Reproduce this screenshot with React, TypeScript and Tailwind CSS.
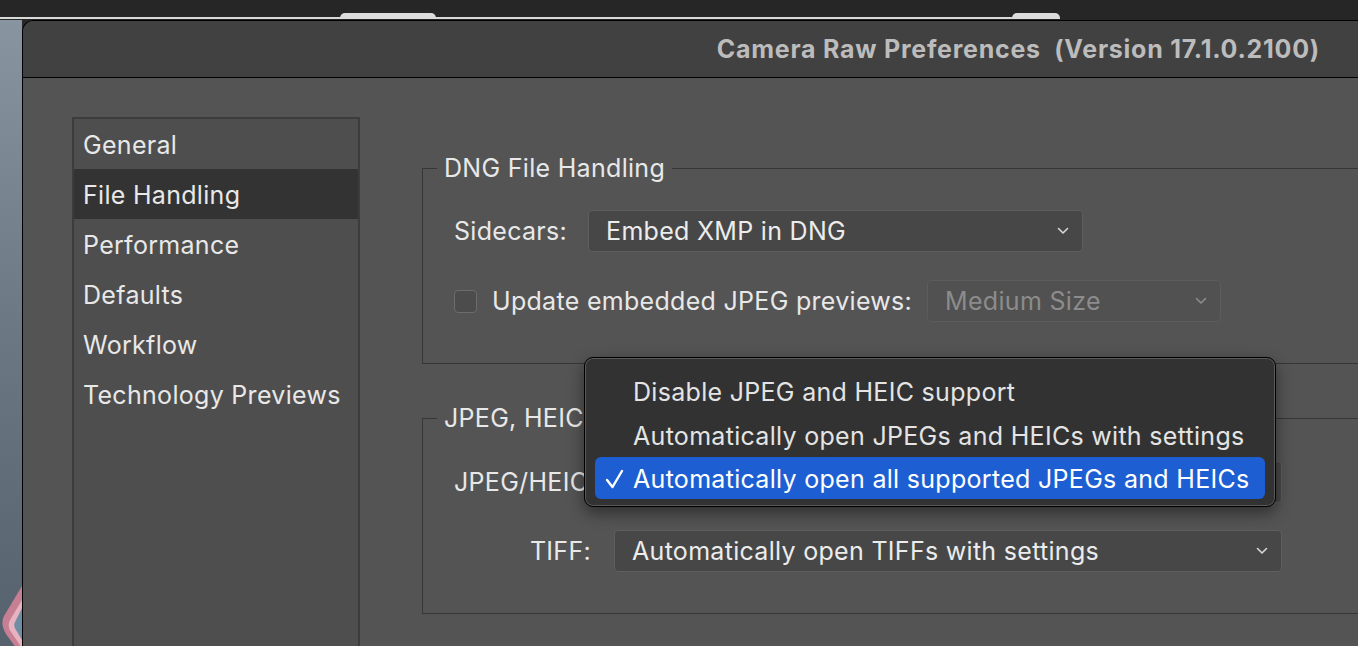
import React from "react";

const Chevron = ({ color = "#d0d0d0" }: { color?: string }) => (
  <svg width="12" height="8" viewBox="0 0 12 8" className="shrink-0">
    <polyline points="1.5,1.5 6,6 10.5,1.5" fill="none" stroke={color} strokeWidth="1.6" strokeLinecap="round" strokeLinejoin="round" />
  </svg>
);

const Select = ({ text, width, disabled = false }: { text: string; width: string; disabled?: boolean }) => (
  <div
    className={
      "h-[42px] flex items-center justify-between pl-[17px] pr-[13px] rounded-[4px] border " +
      (disabled ? "bg-[#515151] border-[#5c5c5c] text-[#8c8c8c] " : "bg-[#474747] border-[#5e5e5e] text-[#ececec] ") +
      width
    }
  >
    <span>{text}</span>
    <Chevron color={disabled ? "#8c8c8c" : "#d6d6d6"} />
  </div>
);

export default function App() {
  const nav = ["General", "File Handling", "Performance", "Defaults", "Workflow", "Technology Previews"];
  return (
    <div
      className="relative w-[1358px] h-[646px] overflow-hidden bg-[#272727] flex flex-col text-[25px] tracking-[0.3px] leading-none text-[#e8e8e8]"
      style={{ fontFamily: "Inter, 'Liberation Sans', sans-serif" }}
    >
      {/* top desktop strip */}
      <div className="relative h-[20px] shrink-0 bg-[#262626]">
        <div className="absolute left-0 top-[17px] w-[1012px] h-[2px] bg-[#d9d9d9]" />
        <div className="absolute left-[340px] top-[13px] w-[96px] h-[6px] rounded-t-[5px] bg-[#dcdcdc]" />
        <div className="absolute left-[1012px] top-[13px] w-[48px] h-[6px] rounded-t-[5px] bg-[#dcdcdc]" />
      </div>

      <div className="flex flex-1 min-h-0">
        {/* wallpaper */}
        <div className="relative w-[22px] shrink-0 bg-gradient-to-b from-[#8894a0] via-[#6b7884] to-[#55626d] overflow-hidden">
          <svg className="absolute left-0 top-[566px]" width="22" height="70" viewBox="0 0 22 70">
            <path d="M22 0 L4 30 Q0 38 6 48 L22 70 Z" fill="#c77f94" />
            <path d="M22 14 L10 34 Q7 40 11 46 L22 62 Z" fill="#e7b3c0" />
            <path d="M22 22 L15 36 Q13 40 16 44 L22 54 Z" fill="#6f8ea4" />
          </svg>
        </div>

        {/* dialog */}
        <div className="flex-1 flex flex-col border-l border-t border-black rounded-tl-[12px] overflow-hidden bg-[#545454]">
          <div className="h-[57px] shrink-0 bg-[#414141] border-b border-black flex items-center justify-end pr-[38px]">
            <span className="font-bold text-[#bcbcbc] tracking-[0.75px]">Camera Raw Preferences&nbsp;&nbsp;(Version 17.1.0.2100)</span>
          </div>

          <div className="flex flex-1 min-h-0 pl-[49px] pt-[39px]">
            {/* sidebar */}
            <div className="w-[288px] shrink-0 border-2 border-b-0 border-[#3c3c3c] bg-[#4e4e4e] flex flex-col">
              {nav.map((n) => (
                <div
                  key={n}
                  className={
                    "h-[50px] flex items-center px-[9px] pt-[3px] " + (n === "File Handling" ? "bg-[#333333]" : "")
                  }
                >
                  {n}
                </div>
              ))}
            </div>

            {/* main */}
            <div className="flex-1 min-w-0 ml-[62px] flex flex-col">
              <fieldset className="w-[1000px] h-[210px] mt-[37px] border border-[#363636]">
                <legend className="ml-[14px] px-[7px] leading-[28px]">DNG File Handling</legend>
                <div className="pl-[31px]">
                  <div className="flex items-center mt-[28px]">
                    <span className="mr-[21px]">Sidecars:</span>
                    <Select text="Embed XMP in DNG" width="w-[495px]" />
                  </div>
                  <div className="flex items-center mt-[28px]">
                    <div className="w-[23px] h-[23px] rounded-[4px] border border-[#6c6c6c] bg-[#4c4c4c] mr-[15px]" />
                    <span className="mr-[15px]">Update embedded JPEG previews:</span>
                    <Select text="Medium Size" width="w-[294px]" disabled />
                  </div>
                </div>
              </fieldset>

              <fieldset className="w-[1000px] h-[210px] mt-[40px] border border-[#363636]">
                <legend className="ml-[14px] px-[7px] leading-[28px]">JPEG, HEIC, and TIFF Handling</legend>
                <div className="pl-[31px]">
                  <div className="flex items-center mt-[29px]">
                    <span className="w-[137px] text-right mr-[23px]">JPEG/HEIC:</span>
                    <Select text="Automatically open all supported JPEGs and HEICs" width="w-[668px]" />
                  </div>
                  <div className="flex items-center mt-[27px]">
                    <span className="w-[137px] text-right mr-[23px]">TIFF:</span>
                    <Select text="Automatically open TIFFs with settings" width="w-[668px]" />
                  </div>
                </div>
              </fieldset>
            </div>
          </div>
        </div>
      </div>

      {/* popup menu */}
      <div className="absolute left-[584px] top-[357px] w-[692px] h-[150px] rounded-[9px] bg-[#323232] border border-black shadow-[inset_0_0_0_1px_#5a5a5a,0_6px_16px_rgba(0,0,0,0.45)] pt-[11px] px-[10px]">
        <div className="h-[44px] flex items-center pl-[38px] pt-[2px] text-[#e4e4e4]">Disable JPEG and HEIC support</div>
        <div className="h-[44px] flex items-center pl-[38px] pt-[2px] text-[#e4e4e4]">Automatically open JPEGs and HEICs with settings</div>
        <div className="h-[42px] flex items-center rounded-[6px] bg-[#1d5fd2] text-white pt-[2px]">
          <span className="w-[38px] pl-[10px] flex items-center">
            <svg width="19" height="20" viewBox="0 0 19 20">
              <polyline points="2,11 7.5,18 17,2" fill="none" stroke="#ffffff" strokeWidth="2.4" strokeLinecap="round" strokeLinejoin="round" />
            </svg>
          </span>
          <span>Automatically open all supported JPEGs and HEICs</span>
        </div>
      </div>
    </div>
  );
}
